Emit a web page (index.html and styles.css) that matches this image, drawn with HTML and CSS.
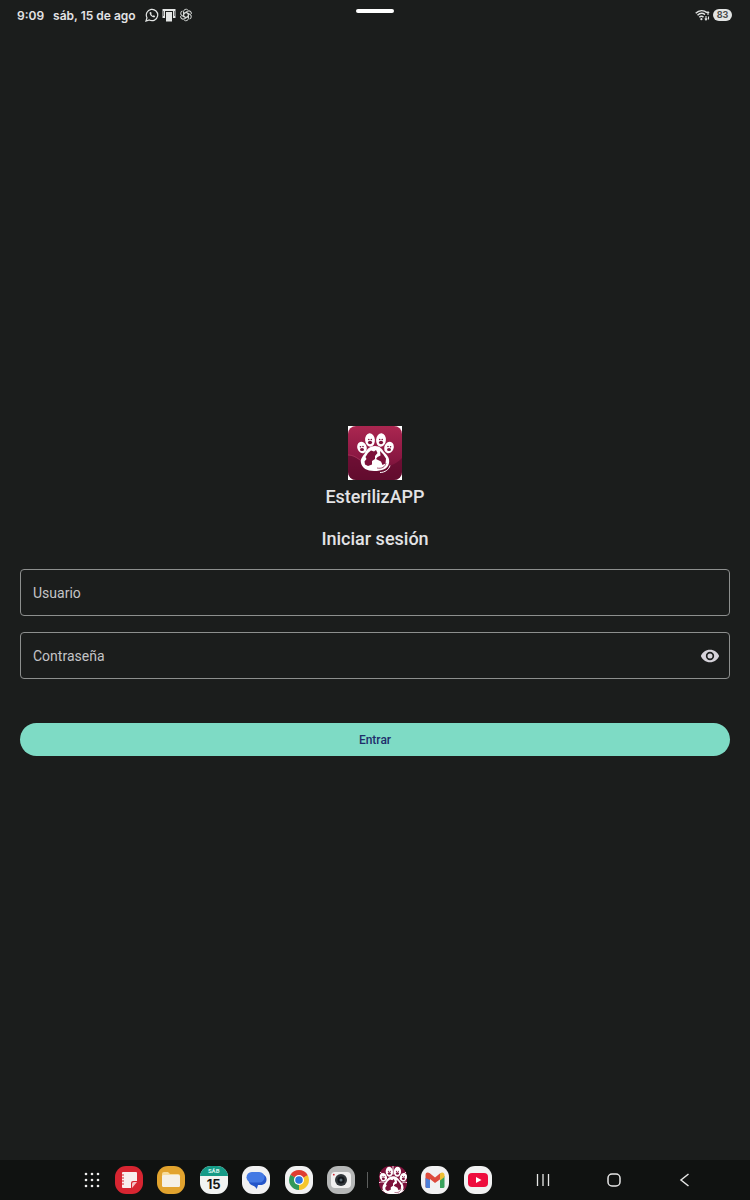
FILE: index.html
```html
<!DOCTYPE html>
<html lang="es">
<head>
    <meta charset="UTF-8">
    <meta name="viewport" content="width=device-width, initial-scale=1.0">
    <title>EsterilizAPP - Iniciar sesión</title>
    <link rel="stylesheet" href="styles.css">
</head>
<body>
    <!-- Figuras compartidas -->
    <svg class="symbols" aria-hidden="true">
        <symbol id="paw" viewBox="0 0 54 54">
            <g fill="#fff">
                <ellipse cx="14" cy="21.500" rx="4.700" ry="5.800" transform="rotate(-20 14 21.500)"/>
                <ellipse cx="22" cy="14" rx="4.900" ry="6.700" transform="rotate(-5 22 14)"/>
                <ellipse cx="33" cy="14" rx="4.900" ry="6.700" transform="rotate(5 33 14)"/>
                <ellipse cx="41" cy="21.500" rx="4.700" ry="5.800" transform="rotate(20 41 21.500)"/>
                <path d="M27 20c-5 0-8 3-10 7-2 3-5 6-4 10 1 5 6 8 13 8 8 0 14-2 15-8 1-5-2-8-5-11-2-3-4-6-9-6z"/>
            </g>
            <g fill="#7d123b">
                <ellipse cx="14" cy="23.500" rx="2" ry="1.600"/><ellipse cx="22" cy="16.500" rx="2.100" ry="1.700"/>
                <ellipse cx="33" cy="16.500" rx="2.100" ry="1.700"/><ellipse cx="41" cy="23.500" rx="2" ry="1.600"/>
                <circle cx="12.500" cy="20.800" r="0.800"/><circle cx="15" cy="20.500" r="0.800"/>
                <circle cx="20.800" cy="13.500" r="0.800"/><circle cx="23.300" cy="13.500" r="0.800"/>
                <circle cx="31.700" cy="13.500" r="0.800"/><circle cx="34.200" cy="13.500" r="0.800"/>
                <circle cx="40" cy="20.500" r="0.800"/><circle cx="42.500" cy="20.800" r="0.800"/>
                <path d="M20 27l3-2.500 3 1 2-1.500 1.500 3-2.500 3 0 3-3 2 0 3.500-4 1.500-3-1.500-.5-3 2-2.500-1-2z"/>
                <path d="M32 25l3 3 3 4.500-.5 5-3 1.500-1.500-3.500-5-2.500 1.500-2 3-1.500z"/>
            </g>
            <path d="M29 42c5 1 8-1 9-5" fill="none" stroke="#7d123b" stroke-width="0.700"/>
            <path d="M32 46.500c5 0 9-3 10-7" fill="none" stroke="#fff" stroke-width="1"/>
        </symbol>
    </svg>

    <!-- Barra de estado -->
    <header class="status-bar">
        <div class="status-left">
            <span>9:09</span>
            <span>sáb, 15 de ago</span>
            <span class="status-icons">
                <svg width="14" height="14" viewBox="0 0 14 14" fill="none" stroke="#e4e6e5">
                    <path d="M1 13l1-3.300a5.700 5.700 0 1 1 2.300 2.300z" stroke-width="1.200"/>
                    <path d="M4.700 4.200c-.6 2.500 2.300 5.500 5 5l.4-1.200-1.500-.8-.8.7-1.700-1.800.6-.8-.7-1.400z" fill="#e4e6e5" stroke="none"/>
                </svg>
                <svg width="14" height="14" viewBox="0 0 14 14" fill="#e4e6e5">
                    <path d="M.5 1h13v9h-2.500V3H3v7H.5zM1.500 3v5h.5V3zM12 3v5h.5V3z"/>
                    <path d="M4 4h6v9.500H4z"/>
                </svg>
                <svg width="14" height="14" viewBox="0 0 14 14" fill="none" stroke="#d5d8d6" stroke-width="1">
                    <g id="petal"><path d="M7 4.500L9.500 6v4.300a2.600 2.600 0 0 1-4.300 1.800"/></g>
                    <use href="#petal" transform="rotate(60 7 7)"/>
                    <use href="#petal" transform="rotate(120 7 7)"/>
                    <use href="#petal" transform="rotate(180 7 7)"/>
                    <use href="#petal" transform="rotate(240 7 7)"/>
                    <use href="#petal" transform="rotate(300 7 7)"/>
                </svg>
            </span>
        </div>
        <div class="handle"></div>
        <div class="status-right">
            <svg width="15" height="12" viewBox="0 0 15 12" fill="none" stroke="#dfe1e0" stroke-width="1.500">
                <path d="M.7 4.200c3.500-3.300 8-3.300 11.300-.6M2.500 6.300c2.300-2.200 5.400-2.300 7.500-.7M4.300 8.300c1.200-1.200 3-1.200 4.200-.2"/>
                <circle cx="6.400" cy="10.200" r="1.100" fill="#dfe1e0" stroke="none"/>
                <path d="M13 2.500v3.500M11.800 4L13 2.700 14.200 4M11 7v4M9.800 9.500l1.200 1.500 1.200-1.500M13.500 7.500v3" stroke-width="1.100"/>
            </svg>
            <span class="battery">83</span>
        </div>
    </header>

    <!-- Formulario de acceso -->
    <main class="login">
        <svg class="logo" viewBox="0 0 54 54" role="img" aria-label="EsterilizAPP">
            <defs>
                <linearGradient id="wine" x1="0" y1="0" x2="0" y2="1">
                    <stop offset="0" stop-color="#ab2750"/>
                    <stop offset="0.550" stop-color="#8c1843"/>
                    <stop offset="1" stop-color="#6a0e32"/>
                </linearGradient>
            </defs>
            <rect width="54" height="54" fill="#fff"/>
            <rect width="54" height="54" rx="8" fill="url(#wine)"/>
            <path d="M0 29c9 0 13 8 23 11s21 2 31-8v14a8 8 0 0 1-8 8H8a8 8 0 0 1-8-8z" fill="#5c0a2b" opacity="0.600"/>
            <path d="M0 29c9 0 13 8 23 11" fill="none" stroke="#b13c63" stroke-width="0.700"/>
            <use href="#paw" width="54" height="54"/>
        </svg>
        <h1 class="app-name">EsterilizAPP</h1>
        <h2 class="login-title">Iniciar sesión</h2>

        <form class="login-form">
            <div class="field">
                <label for="usuario">Usuario</label>
                <input type="text" id="usuario" name="usuario" autocomplete="username" required>
            </div>
            <div class="field">
                <label for="contrasena">Contraseña</label>
                <input type="password" id="contrasena" name="contrasena" autocomplete="current-password" required>
                <button type="button" class="show-password" aria-label="Mostrar contraseña">
                    <svg width="20" height="20" viewBox="0 0 24 24" fill="#d6d3da">
                        <path d="M12 4.500C7 4.500 2.730 7.610 1 12c1.730 4.390 6 7.500 11 7.500s9.270-3.110 11-7.500c-1.730-4.390-6-7.500-11-7.500zM12 17a5 5 0 1 1 0-10 5 5 0 0 1 0 10zm0-8a3 3 0 1 0 0 6 3 3 0 0 0 0-6z"/>
                    </svg>
                </button>
            </div>
            <button type="submit" class="submit-button">Entrar</button>
        </form>
    </main>

    <!-- Barra de tareas -->
    <footer class="taskbar">
        <button class="task-button" aria-label="Aplicaciones">
            <svg width="20" height="20" viewBox="0 0 20 20" fill="#eee">
                <circle cx="4" cy="4" r="1.300"/><circle cx="10" cy="4" r="1.300"/><circle cx="16" cy="4" r="1.300"/>
                <circle cx="4" cy="10" r="1.300"/><circle cx="10" cy="10" r="1.300"/><circle cx="16" cy="10" r="1.300"/>
                <circle cx="4" cy="16" r="1.300"/><circle cx="10" cy="16" r="1.300"/><circle cx="16" cy="16" r="1.300"/>
            </svg>
        </button>

        <div class="apps">
            <button class="task-button app red" aria-label="Notas">
                <svg viewBox="0 0 28 28">
                    <path d="M7 7q0-1 1-1h13q1 0 1 1v8h-4q-2 0-2 2v5H8q-1 0-1-1z" fill="#f8eeee"/>
                    <path d="M17 22v-4q0-2 2-2h3z" fill="#f4c3c6"/>
                    <path d="M6 9h3M6 12h3M6 15h3M6 18h3" stroke="#d72531" stroke-width="1"/>
                </svg>
            </button>
            <button class="task-button app yellow" aria-label="Mis archivos">
                <svg viewBox="0 0 28 28">
                    <path d="M5 8q0-2 2-2h4l2 2h8q2 0 2 2v9H5z" fill="#f7dc9c"/>
                    <rect x="5" y="9" width="18" height="12" rx="1.500" fill="#f5f0e6"/>
                </svg>
            </button>
            <button class="task-button app calendar" aria-label="Calendario">
                <span class="calendar-month">SÁB</span>
                <span class="calendar-day">15</span>
            </button>
            <button class="task-button app white" aria-label="Mensajes">
                <svg viewBox="0 0 28 28">
                    <path d="M14 8h4.500c4 0 6 2.500 6 5.500s-2 5.500-6 5.500H16c-.5 2-1 3-1.500 4-1-2-2-3-5-4C5 17 6 8 14 8z" fill="#2455c9"/>
                    <rect x="4.500" y="6" width="18" height="10.500" rx="5.200" fill="#4479e4"/>
                </svg>
            </button>
            <button class="task-button app white" aria-label="Chrome">
                <svg viewBox="0 0 28 28">
                    <path d="M14 14L5.340 9A10 10 0 0 1 22.660 9z" fill="#df3d31"/>
                    <path d="M14 14l8.660-5A10 10 0 0 1 14 24z" fill="#f5c62c"/>
                    <path d="M14 14v10A10 10 0 0 1 5.340 9z" fill="#31995a"/>
                    <path d="M14 9h8.660L14 14z" fill="#df3d31"/>
                    <path d="M9.700 16.500L5.340 9 14 14z" fill="#31995a"/>
                    <path d="M14 24l4.300-7.500H14z" fill="#f5c62c"/>
                    <circle cx="14" cy="14" r="5" fill="#fff"/>
                    <circle cx="14" cy="14" r="3.800" fill="#2c74df"/>
                </svg>
            </button>
            <button class="task-button app gray" aria-label="Cámara">
                <svg viewBox="0 0 28 28">
                    <rect x="4" y="6" width="20" height="16" rx="4" fill="#f0f0f0"/>
                    <circle cx="14" cy="14" r="6" fill="#30363a"/>
                    <circle cx="14" cy="14" r="3.600" fill="#11161a"/>
                    <circle cx="14" cy="14" r="1.500" fill="#5d6d76"/>
                    <circle cx="6.800" cy="8.700" r="0.900" fill="#d12c36"/>
                </svg>
            </button>
        </div>

        <div class="divider"></div>

        <div class="apps recent">
            <button class="task-button app wine" aria-label="EsterilizAPP">
                <svg viewBox="6 6 42 42">
                    <path d="M6 31c5-2 9-1 12 4M48 31c-5-2-8 0-9 4M10 42c6 4 12 3 17 6M44 42l-8 6M6 14l5 4M48 14l-5 4M27 6v13" fill="none" stroke="#f4e6ec" stroke-width="1.500"/>
                    <use href="#paw" x="-3" y="-1" width="60" height="60"/>
                </svg>
            </button>
            <button class="task-button app white" aria-label="Gmail">
                <svg viewBox="0 0 28 28">
                    <path d="M4.500 9c0-3 2.500-3 4-2l5.500 4.500L19.500 7v6L14 17l-5-4v9H6q-1.500 0-1.500-1.500z" fill="#dd4a3c"/>
                    <path d="M4.500 12L9 14v8H6q-1.500 0-1.500-1.500z" fill="#4d7fd8"/>
                    <path d="M19 12l4.500-2v10.500Q23.500 22 22 22h-3z" fill="#38a25c"/>
                    <path d="M19 7.500c2-2 4.500-1 4.500 1.500v2L19 14.500z" fill="#edbf32"/>
                </svg>
            </button>
            <button class="task-button app white" aria-label="YouTube">
                <svg viewBox="0 0 28 28">
                    <rect x="4" y="7" width="20" height="14" rx="4" fill="#ee0c3d"/>
                    <path d="M12 11l5.500 3-5.500 3z" fill="#fff"/>
                </svg>
            </button>
        </div>

        <nav class="nav-buttons">
            <button class="task-button" aria-label="Recientes">
                <svg width="20" height="20" viewBox="0 0 20 20" fill="none" stroke="#e6e6e6" stroke-width="1.300">
                    <path d="M4.500 4v12M10 4v12M15.500 4v12"/>
                </svg>
            </button>
            <button class="task-button" aria-label="Inicio">
                <svg width="20" height="20" viewBox="0 0 20 20" fill="none" stroke="#e6e6e6" stroke-width="1.500">
                    <rect x="4" y="4" width="12" height="12" rx="4"/>
                </svg>
            </button>
            <button class="task-button" aria-label="Atrás">
                <svg width="20" height="20" viewBox="0 0 20 20" fill="none" stroke="#e6e6e6" stroke-width="1.500">
                    <path d="M13.500 4L6 10l7.500 6"/>
                </svg>
            </button>
        </nav>
    </footer>
</body>
</html>
```
FILE: styles.css
```css
* {
    box-sizing: border-box;
}

body {
    margin: 0;
    min-height: 100vh;
    display: flex;
    flex-direction: column;
    background-color: #1b1d1c;
    color: #e3e3e5;
    font-family: Roboto, "Liberation Sans", sans-serif;
}

button {
    font-family: inherit;
    border: none;
    cursor: pointer;
}

svg {
    display: block;
}

.symbols {
    position: absolute;
    width: 0;
    height: 0;
}

/* Barra de estado */
.status-bar {
    display: grid;
    grid-template-columns: 1fr auto 1fr;
    align-items: center;
    height: 30px;
    padding: 0 18px 0 17px;
    font-family: Inter, sans-serif;
    font-size: 12px;
    font-weight: 600;
}

.status-left,
.status-right {
    display: flex;
    align-items: center;
    gap: 9px;
}

.status-right {
    justify-content: flex-end;
    gap: 3px;
}

.status-icons {
    display: flex;
    gap: 3px;
}

.handle {
    align-self: start;
    width: 38px;
    height: 4px;
    margin-top: 9px;
    border-radius: 2px;
    background-color: #fff;
}

.battery {
    width: 19px;
    border-radius: 6px;
    background-color: #e2e4e3;
    color: #4a4c4b;
    font-size: 9px;
    font-weight: 700;
    line-height: 12px;
    text-align: center;
}

/* Formulario de acceso */
.login {
    flex: 1;
    display: flex;
    flex-direction: column;
    align-items: center;
    justify-content: center;
    padding: 0 20px 8px;
}

.logo {
    width: 54px;
    height: 54px;
}

.app-name,
.login-title {
    margin: 5px 0 0;
    font-size: 18px;
    font-weight: 500;
    line-height: 24px;
}

.login-title {
    margin: 18px 0;
}

.login-form {
    display: flex;
    flex-direction: column;
    gap: 16px;
    width: 100%;
}

.field {
    display: grid;
    grid-template-columns: 1fr 40px;
    align-items: center;
}

.field label,
.field input {
    grid-row: 1;
    grid-column: 1 / 3;
}

.field label {
    padding-left: 13px;
    color: #c4c4c7;
    font-size: 14px;
    pointer-events: none;
    z-index: 1;
}

.field input {
    width: 100%;
    height: 47px;
    padding: 0 13px;
    border: 1px solid #8d8f8e;
    border-radius: 4px;
    background-color: transparent;
    color: #e3e3e5;
    font-family: inherit;
    font-size: 14px;
}

.field:focus-within label,
.field:has(input:valid) label {
    visibility: hidden;
}

.show-password {
    grid-row: 1;
    grid-column: 2;
    justify-self: center;
    padding: 0;
    background: none;
    z-index: 1;
}

.submit-button {
    height: 33px;
    margin-top: 28px;
    border-radius: 17px;
    background-color: #7edbc5;
    color: #1f2e6b;
    font-size: 12px;
    font-weight: 500;
}

/* Barra de tareas */
.taskbar {
    display: flex;
    align-items: center;
    justify-content: center;
    height: 40px;
    padding-left: 26px;
    background-color: #101211;
}

.task-button {
    padding: 0;
    background: none;
}

.apps {
    display: flex;
    justify-content: space-between;
    width: 241px;
    margin-left: 13px;
}

.apps.recent {
    width: 113px;
    margin-left: 11px;
}

.app {
    width: 28px;
    height: 28px;
    border-radius: 11px;
    overflow: hidden;
}

.red {
    background-color: #d72531;
}

.yellow {
    background-color: #e2a32e;
}

.white {
    background-color: #f1f1f2;
}

.gray {
    background-color: #b5b7b7;
}

.wine {
    background-color: #7d123b;
}

.calendar {
    display: flex;
    flex-direction: column;
    align-items: center;
    background-color: #f1f3f2;
}

.calendar-month {
    width: 100%;
    background-color: #159b87;
    color: #d4f2ec;
    font-size: 6px;
    font-weight: 700;
    line-height: 10px;
}

.calendar-day {
    color: #151515;
    font-family: Inter, sans-serif;
    font-size: 13px;
    font-weight: 700;
    line-height: 16px;
}

.divider {
    width: 1px;
    height: 16px;
    margin-left: 11px;
    background-color: #5d5f5e;
}

.nav-buttons {
    display: flex;
    gap: 51px;
    margin-left: 41px;
}
```
